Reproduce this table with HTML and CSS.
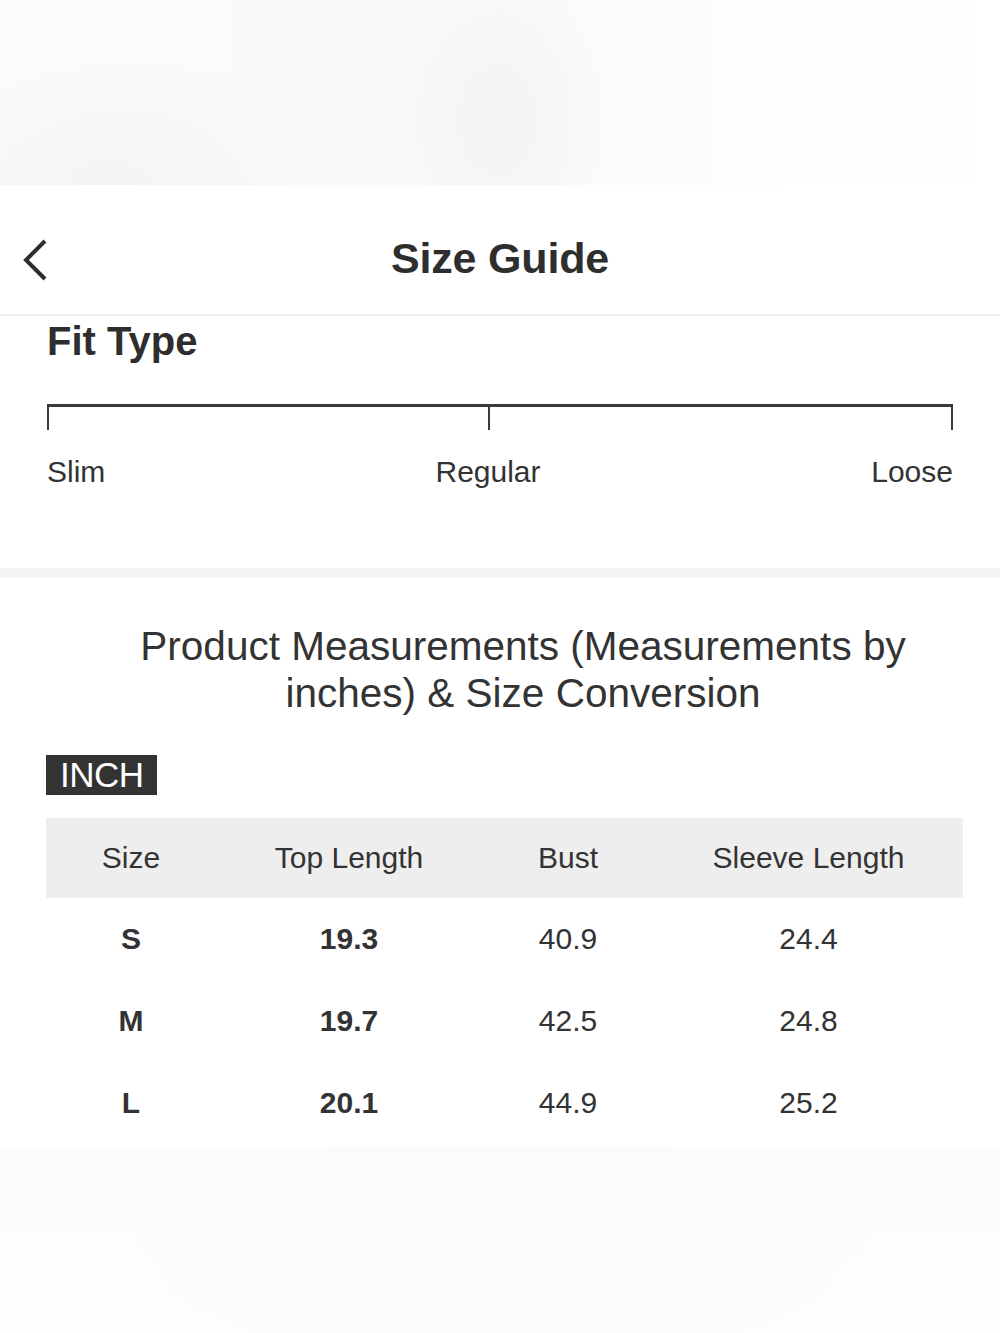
FILE: index.html
```html
<!DOCTYPE html>
<html lang="en">
<head>
<meta charset="utf-8">
<title>Size Guide</title>
<link rel="stylesheet" href="styles.css">
</head>
<body>
<div class="page">
  <div class="top-blur"></div>
  <header class="nav">
    <span class="back" aria-label="Back">
      <svg width="26" height="42" viewBox="0 0 26 42"><path d="M23 2 L4 21 L23 40" fill="none" stroke="#2e2e2e" stroke-width="4" stroke-linecap="butt" stroke-linejoin="miter"/></svg>
    </span>
    <h1 class="nav-title">Size Guide</h1>
  </header>

  <section class="fit">
    <h2 class="fit-title">Fit Type</h2>
    <div class="scale">
      <span class="seg seg-left"></span>
      <span class="seg seg-right"></span>
    </div>
    <div class="scale-labels">
      <span class="lbl">Slim</span>
      <div class="lbl-right">
        <span class="lbl lbl-mid">Regular</span>
        <span class="lbl">Loose</span>
      </div>
    </div>
  </section>

  <div class="band"></div>

  <section class="measure">
    <h2 class="measure-title">Product Measurements (Measurements by inches) &amp; Size Conversion</h2>
    <div class="unit"><span class="unit-badge">INCH</span></div>
    <div class="table">
      <div class="row head">
        <div class="cell">Size</div>
        <div class="cell">Top Length</div>
        <div class="cell">Bust</div>
        <div class="cell">Sleeve Length</div>
      </div>
      <div class="row">
        <div class="cell b">S</div>
        <div class="cell b">19.3</div>
        <div class="cell">40.9</div>
        <div class="cell">24.4</div>
      </div>
      <div class="row">
        <div class="cell b">M</div>
        <div class="cell b">19.7</div>
        <div class="cell">42.5</div>
        <div class="cell">24.8</div>
      </div>
      <div class="row">
        <div class="cell b">L</div>
        <div class="cell b">20.1</div>
        <div class="cell">44.9</div>
        <div class="cell">25.2</div>
      </div>
    </div>
  </section>

  <div class="bottom-blur"></div>
</div>
</body>
</html>
```

FILE: styles.css
```css
* { box-sizing: border-box; }
html, body { margin: 0; padding: 0; background: #ffffff; }
body {
  font-family: "Liberation Sans", Arial, Helvetica, sans-serif;
  color: #333333;
  width: 1000px;
}
.page { width: 1000px; min-height: 1333px; display: flex; flex-direction: column; }

.top-blur {
  height: 185px;
  background:
    radial-gradient(ellipse 110px 140px at 500px 120px, #f3f3f3 0%, rgba(245,245,245,0) 100%),
    radial-gradient(ellipse 220px 130px at 110px 185px, #f4f4f4 0%, rgba(246,246,246,0) 100%),
    linear-gradient(90deg, #fbfbfb 0%, #f9f9f9 50%, #fdfdfd 75%, #ffffff 100%);
}

.nav {
  height: 131px;
  border-bottom: 2px solid #ececec;
  display: flex;
  align-items: center;
  justify-content: center;
  position: relative;
  padding-top: 16px;
  background: #fff;
}
.back {
  position: absolute;
  left: 22px;
  top: 54px;
  width: 26px;
  height: 42px;
  display: block;
}
.back svg { display: block; }
.nav-title {
  margin: 0;
  font-size: 43px;
  font-weight: 700;
  color: #2e2e2e;
  letter-spacing: -0.2px;
  line-height: 50px;
}

.fit { padding: 2px 47px 0 47px; height: 252px; }
.fit-title {
  margin: 0;
  font-size: 40px;
  line-height: 46px;
  font-weight: 700;
  color: #2e2e2e;
}
.scale {
  margin-top: 40px;
  height: 26px;
  display: grid;
  grid-template-columns: 441px 1fr;
}
.seg {
  border-top: 3px solid #3a3a3a;
  border-left: 2px solid #3a3a3a;
  height: 26px;
}
.seg-right { border-right: 2px solid #3a3a3a; }
.scale-labels {
  margin-top: 24px;
  display: grid;
  grid-template-columns: 441px 1fr;
  font-size: 30px;
  line-height: 36px;
  color: #333;
}
.lbl-right {
  display: flex;
  justify-content: space-between;
  align-items: baseline;
}
.lbl-mid { transform: translateX(-50%); display: inline-block; }

.band { height: 10px; background: #f5f5f5; }

.measure { padding: 45px 37px 0 46px; }
.measure-title {
  margin: 0 0 0 47px;
  width: 860px;
  text-align: center;
  font-weight: 400;
  font-size: 40.5px;
  line-height: 47px;
  color: #333;
}
.unit { margin-top: 38px; display: flex; }
.unit-badge {
  background: #333333;
  color: #ffffff;
  font-size: 35px;
  line-height: 40px;
  height: 40px;
  padding: 0 13px 0 14px;
  letter-spacing: -0.5px;
}
.table { margin-top: 23px; width: 917px; }
.row {
  display: grid;
  grid-template-columns: 170px 266px 172px 309px;
  height: 82px;
  align-items: center;
}
.row.head { background: #eeeeee; height: 80px; }
.cell {
  text-align: center;
  font-size: 30px;
  color: #333;
}
.cell.b { font-weight: 700; }

.bottom-blur {
  flex: 1;
  margin-top: 2px;
  background:
    radial-gradient(ellipse 380px 160px at 500px 110px, #fafafa 0%, rgba(252,252,252,0) 100%),
    linear-gradient(180deg, #fcfcfc 0%, #fdfdfd 100%);
}
```
